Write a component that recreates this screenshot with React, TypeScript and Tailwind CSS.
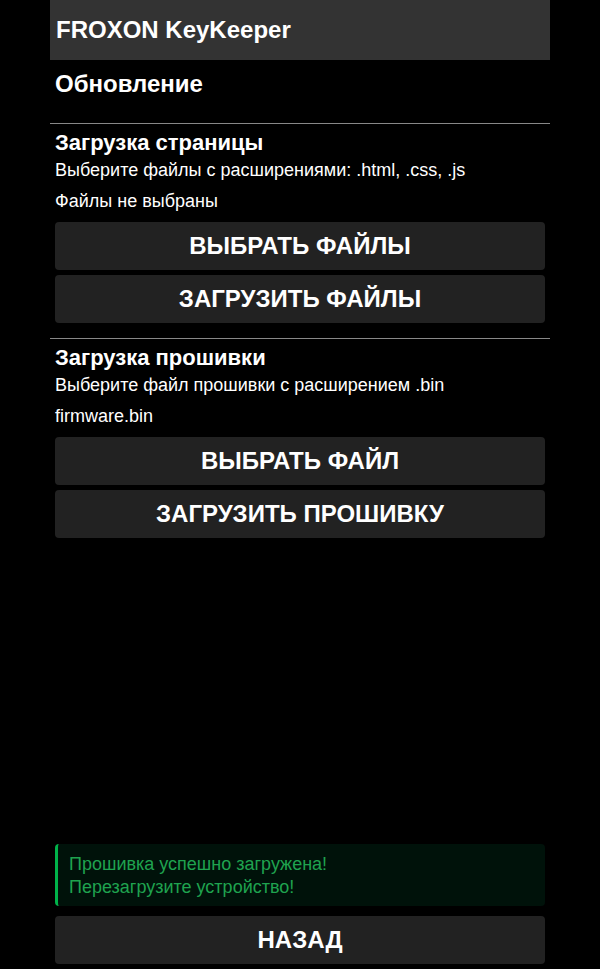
export default function App() {
  return (
    <div className="min-h-screen bg-black font-['Liberation_Sans',Arial,sans-serif] text-white">
      <div className="mx-auto flex min-h-screen w-[500px] flex-col">
        <header className="flex h-[60px] items-center bg-[#333333] px-[6px]">
          <h1 className="text-[24px] font-bold">FROXON KeyKeeper</h1>
        </header>

        <h2 className="px-[5px] pt-[11px] pb-[26px] text-[24px] font-bold leading-[26px]">Обновление</h2>

        {/* Page upload */}
        <section className="border-t border-[#888888] px-[5px] pt-[6px]">
          <h3 className="text-[22px] font-bold leading-[25px]">Загрузка страницы</h3>
          <p className="mt-[5px] text-[18px] leading-[21px]">Выберите файлы с расширениями: .html, .css, .js</p>
          <p className="mt-[10px] text-[18px] leading-[21px]">Файлы не выбраны</p>
          <div className="mt-[10px] flex flex-col gap-[5px]">
            <button className="h-[48px] rounded-[4px] bg-[#222222] text-[24px] font-bold">ВЫБРАТЬ ФАЙЛЫ</button>
            <button className="h-[48px] rounded-[4px] bg-[#222222] text-[24px] font-bold">ЗАГРУЗИТЬ ФАЙЛЫ</button>
          </div>
        </section>

        {/* Firmware upload */}
        <section className="mt-[15px] border-t border-[#888888] px-[5px] pt-[6px]">
          <h3 className="text-[22px] font-bold leading-[25px]">Загрузка прошивки</h3>
          <p className="mt-[5px] text-[18px] leading-[21px]">Выберите файл прошивки с расширением .bin</p>
          <p className="mt-[10px] text-[18px] leading-[21px]">firmware.bin</p>
          <div className="mt-[10px] flex flex-col gap-[5px]">
            <button className="h-[48px] rounded-[4px] bg-[#222222] text-[24px] font-bold">ВЫБРАТЬ ФАЙЛ</button>
            <button className="h-[48px] rounded-[4px] bg-[#222222] text-[24px] font-bold">ЗАГРУЗИТЬ ПРОШИВКУ</button>
          </div>
        </section>

        <div className="flex-1" />

        <div className="flex flex-col gap-[10px] px-[5px] pb-[5px]">
          <div className="rounded-[4px] border-l-[3px] border-[#00b34a] bg-[#00120a] pt-[9px] pb-[7px] pr-[12px] pl-[11px] text-[18px] leading-[23px] text-[#1fa34f]">
            <p>Прошивка успешно загружена!</p>
            <p>Перезагрузите устройство!</p>
          </div>
          <button className="h-[48px] rounded-[4px] bg-[#222222] text-[24px] font-bold">НАЗАД</button>
        </div>
      </div>
    </div>
  )
}
